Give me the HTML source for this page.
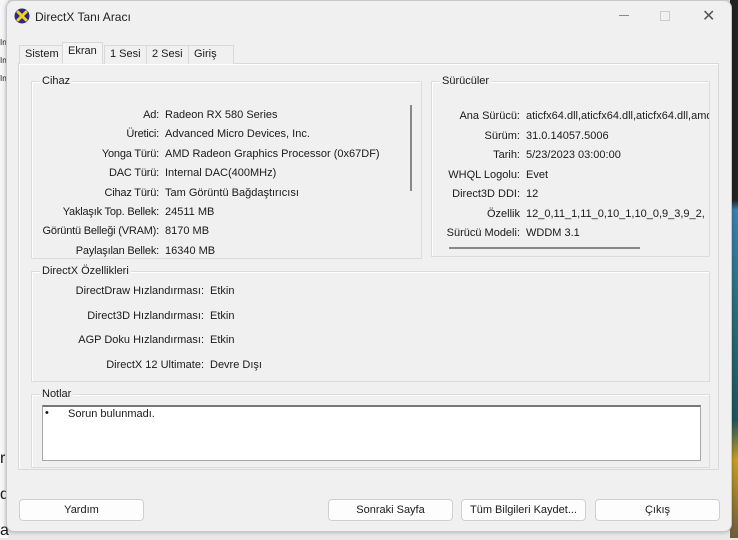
<!DOCTYPE html>
<html><head><meta charset="utf-8"><style>
*{box-sizing:border-box;margin:0;padding:0}
body{width:738px;height:538px;position:relative;overflow:hidden;background:#e8e8e8;font-family:"Liberation Sans",sans-serif;font-size:11px;color:#1a1a1a}
.a{position:absolute;white-space:nowrap}
.r{text-align:right}
.win{position:absolute;left:6px;top:0;width:726px;height:532px;background:#f0f0f0;border:1px solid #c8c8c8;border-radius:8px;box-shadow:0 0 4px rgba(0,0,0,.3)}
.grp{position:absolute;border:1px solid #dcdcdc;box-shadow:inset 1px 1px 0 #fff}
.gl{position:absolute;top:-7px;left:8px;background:#f0f0f0;padding:0 2px}
.btn{position:absolute;height:22px;background:#fdfdfd;border:1px solid #d0d0d0;border-radius:4px;text-align:center;line-height:20px}
.tab{position:absolute;top:44px;height:19px;border:1px solid #d9d9d9;border-bottom:none;background:#f0f0f0;line-height:17px;padding:0 5px;font-size:11px}
</style></head><body>
<div class="a" style="left:0;top:0;width:8px;height:538px;background:#f7f7f7"></div>
<div class="a" style="left:0;top:38px;font-size:8px">In<br><br>In<br><br>In</div>
<div class="a" style="left:0;top:450px;font-size:16px">r<br><br>d<br><br>a</div>
<div class="a" style="left:730px;top:0;width:8px;height:538px;background:linear-gradient(#222 0,#222 200px,#3a80b0 210px,#2a7080 300px,#1b5560 420px,#c8a020 460px,#6a5a40 540px)"></div>
<div class="win">
<svg class="a" style="left:7px;top:7px" width="16" height="16" viewBox="0 0 16 16"><circle cx="8" cy="8" r="7.5" fill="#2b2a8a"/><path d="M4 4L12 12M12 4L4 12" stroke="#f2d21a" stroke-width="3" stroke-linecap="round"/></svg>
<div class="a" style="left:28px;top:9px;font-size:12px;color:#222">DirectX Tanı Aracı</div>
<div class="a" style="left:612px;top:14px;width:10px;border-top:1px solid #888"></div>
<div class="a" style="left:653px;top:10px;width:10px;height:10px;border:1px solid #ccc"></div>
<div class="a" style="left:695px;top:5px;font-size:16px;color:#555">✕</div>
<div class="a" style="left:11px;top:62px;width:701px;height:407px;border:1px solid #d9d9d9;background:#f0f0f0;box-shadow:inset 1px 1px 0 #fff"></div>
<div class="tab" style="left:12px">Sistem</div>
<div class="tab" style="left:55px;top:41px;height:22px;border-bottom:1px solid #f0f0f0;background:#f4f4f4">Ekran</div>
<div class="tab" style="left:97px">1 Sesi</div>
<div class="tab" style="left:139px">2 Sesi</div>
<div class="tab" style="left:181px;width:46px">Giriş</div>

<div class="grp" style="left:24px;top:80px;width:391px;height:178px"><span class="gl">Cihaz</span></div>
<div class="a" style="left:403px;top:104px;width:2px;height:86px;background:#888"></div>
<div class="a r" style="left:30px;top:105px;width:122px;line-height:19.4px;letter-spacing:-0.2px">Ad:<br>Üretici:<br>Yonga Türü:<br>DAC Türü:<br>Cihaz Türü:<br>Yaklaşık Top. Bellek:<br>Görüntü Belleği (VRAM):<br>Paylaşılan Bellek:</div>
<div class="a" style="left:158px;top:105px;line-height:19.4px">Radeon RX 580 Series<br>Advanced Micro Devices, Inc.<br>AMD Radeon Graphics Processor (0x67DF)<br>Internal DAC(400MHz)<br>Tam Görüntü Bağdaştırıcısı<br>24511 MB<br>8170 MB<br>16340 MB</div>

<div class="grp" style="left:424px;top:80px;width:279px;height:176px"><span class="gl">Sürücüler</span>
<div class="a r" style="left:0;top:25px;width:88px;line-height:19.5px">Ana Sürücü:<br>Sürüm:<br>Tarih:<br>WHQL Logolu:<br>Direct3D DDI:<br>Özellik<br>Sürücü Modeli:</div>
<div class="a" style="left:94px;top:25px;width:183px;overflow:hidden;line-height:19.5px">aticfx64.dll,aticfx64.dll,aticfx64.dll,amd<br>31.0.14057.5006<br>5/23/2023 03:00:00<br>Evet<br>12<br>12_0,11_1,11_0,10_1,10_0,9_3,9_2,<br>WDDM 3.1</div>
<div class="a" style="left:17px;top:165px;width:191px;height:2px;background:#888"></div>
</div>

<div class="grp" style="left:24px;top:270px;width:679px;height:111px"><span class="gl">DirectX Özellikleri</span></div>
<div class="a r" style="left:30px;top:278px;width:167px;line-height:24.7px">DirectDraw Hızlandırması:<br>Direct3D Hızlandırması:<br>AGP Doku Hızlandırması:<br>DirectX 12 Ultimate:</div>
<div class="a" style="left:203px;top:278px;line-height:24.7px">Etkin<br>Etkin<br>Etkin<br>Devre Dışı</div>

<div class="grp" style="left:24px;top:393px;width:679px;height:74px"><span class="gl">Notlar</span></div>
<div class="a" style="left:35px;top:404px;width:659px;height:56px;background:#fff;border:1px solid #a8a8a8;border-top:2px solid #777"></div>
<div class="a" style="left:38px;top:406px">•</div>
<div class="a" style="left:61px;top:407px">Sorun bulunmadı.</div>

<div class="btn" style="left:12px;top:498px;width:125px">Yardım</div>
<div class="btn" style="left:321px;top:498px;width:125px">Sonraki Sayfa</div>
<div class="btn" style="left:454px;top:498px;width:125px">Tüm Bilgileri Kaydet...</div>
<div class="btn" style="left:588px;top:498px;width:125px">Çıkış</div>
</div>
</body></html>
